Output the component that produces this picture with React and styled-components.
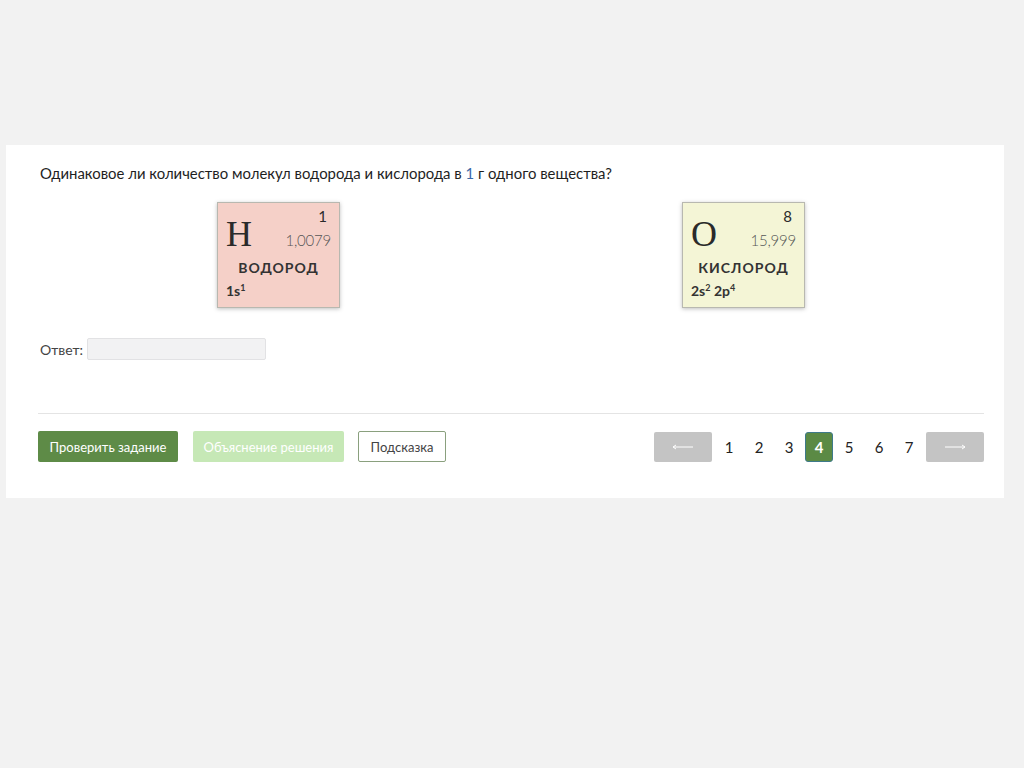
import React from "react";
import styled, { createGlobalStyle } from "styled-components";

const Global = createGlobalStyle`
  html, body { margin: 0; padding: 0; background: #f2f2f2; }
  body { font-family: "Lato", "Open Sans", sans-serif; color: #222; }
`;

const Page = styled.div`
  padding: 145px 20px 0 6px;
`;

const Panel = styled.div`
  width: 998px;
  height: 353px;
  box-sizing: border-box;
  background: #fff;
  padding: 18px 20px 0 32px;
`;

const Question = styled.div`
  font-size: 14.9px;
  line-height: 20px;
  color: #1e1e1e;
  margin-left: 2px;
`;

const Num = styled.span`
  color: #3d6aa8;
`;

const CardsRow = styled.div`
  display: flex;
  margin-top: 19px;
  padding-left: 179px;
  gap: 342px;
`;

const Card = styled.div`
  width: 123px;
  height: 106px;
  box-sizing: border-box;
  background: ${p => p.$bg};
  border: 1px solid #b8b8b0;
  box-shadow: 0 1px 4px rgba(0,0,0,0.25);
  display: grid;
  grid-template-columns: auto 1fr;
  grid-template-rows: 12px 30px 26px auto;
  padding: 5px 8px 0 8px;
  color: #2a2a2a;
`;

const Number = styled.div`
  grid-column: 2;
  grid-row: 1;
  justify-self: end;
  font-size: 15px;
  line-height: 16px;
  margin-right: 4px;
`;

const Symbol = styled.div`
  grid-column: 1;
  grid-row: 1 / span 2;
  align-self: end;
  font-family: "Liberation Serif", serif;
  font-size: 36px;
  line-height: 36px;
  margin-bottom: -2px;
  color: #2a2a2a;
`;

const Mass = styled.div`
  grid-column: 2;
  grid-row: 2;
  justify-self: end;
  align-self: end;
  font-size: 15px;
  font-weight: 300;
  color: #555;
  margin-bottom: 1px;
  letter-spacing: -0.2px;
`;

const Name = styled.div`
  grid-column: 1 / span 2;
  grid-row: 3;
  justify-self: center;
  align-self: end;
  font-size: 14px;
  font-weight: 700;
  letter-spacing: 1px;
  color: #333;
`;

const Config = styled.div`
  grid-column: 1 / span 2;
  grid-row: 4;
  font-size: 14px;
  font-weight: 700;
  margin-top: 6px;
  color: #333;
  sup { font-size: 9px; vertical-align: 5px; line-height: 0; }
`;

const AnswerRow = styled.div`
  display: flex;
  align-items: center;
  margin-top: 30px;
  margin-left: 2px;
  gap: 4px;
`;

const AnswerLabel = styled.span`
  font-size: 14px;
  color: #444;
`;

const AnswerInput = styled.div`
  width: 177px;
  height: 20px;
  background: #f2f2f3;
  border: 1px solid #e2e2e4;
  border-radius: 2px;
`;

const Divider = styled.div`
  height: 1px;
  background: #e4e4e4;
  margin-top: 53px;
`;

const Footer = styled.div`
  display: flex;
  align-items: center;
  margin-top: 17px;
`;

const Btn = styled.div`
  height: 31px;
  box-sizing: border-box;
  padding: 0;
  display: flex;
  align-items: center;
  justify-content: center;
  white-space: nowrap;
  border-radius: 2px;
  font-size: 13px;
  width: ${p => p.$w}px;
  margin-right: ${p => p.$mr || 0}px;
  background: ${p => p.$bg};
  color: ${p => p.$color};
  border: ${p => p.$border || "none"};
`;

const Spacer = styled.div`
  flex: 1;
`;

const Pager = styled.div`
  display: flex;
  align-items: center;
`;

const Arrow = styled.div`
  width: 58px;
  height: 30px;
  background: #c4c4c4;
  border-radius: 2px;
  display: flex;
  align-items: center;
  justify-content: center;
  margin: ${p => p.$m};
`;

const PageNum = styled.div`
  width: 28px;
  height: 30px;
  margin: 0 1px;
  display: flex;
  align-items: center;
  justify-content: center;
  font-size: 15px;
  font-weight: ${p => (p.$active ? 700 : 400)};
  color: ${p => (p.$active ? "#fff" : "#222")};
  background: ${p => (p.$active ? "#5b8a45" : "transparent")};
  border: ${p => (p.$active ? "1px solid #3e7a8a" : "none")};
  box-sizing: border-box;
  border-radius: 3px;
`;

const ArrowIcon = ({ dir }) => (
  <svg width="22" height="6" viewBox="0 0 22 6">
    {dir === "left" ? (
      <path d="M1 3 H21 M1 3 L4 1 M1 3 L4 5" stroke="#fff" strokeWidth="1" fill="none" />
    ) : (
      <path d="M1 3 H21 M21 3 L18 1 M21 3 L18 5" stroke="#fff" strokeWidth="1" fill="none" />
    )}
  </svg>
);

const Element = ({ bg, num, sym, mass, name, children }) => (
  <Card $bg={bg}>
    <Number>{num}</Number>
    <Symbol>{sym}</Symbol>
    <Mass>{mass}</Mass>
    <Name>{name}</Name>
    <Config>{children}</Config>
  </Card>
);

export default function App() {
  return (
    <>
      <Global />
      <Page>
        <Panel>
          <Question>
            Одинаковое ли количество молекул водорода и кислорода в <Num>1</Num> г одного вещества?
          </Question>
          <CardsRow>
            <Element bg="#f5d0c8" num="1" sym="H" mass="1,0079" name="ВОДОРОД">
              1s<sup>1</sup>
            </Element>
            <Element bg="#f4f5d6" num="8" sym="O" mass="15,999" name="КИСЛОРОД">
              2s<sup>2</sup> 2p<sup>4</sup>
            </Element>
          </CardsRow>
          <AnswerRow>
            <AnswerLabel>Ответ:</AnswerLabel>
            <AnswerInput />
          </AnswerRow>
          <Divider />
          <Footer>
            <Btn $w={140} $mr={15} $bg="#5e8b47" $color="#fff">Проверить задание</Btn>
            <Btn $w={151} $mr={14} $bg="#c6e8b6" $color="#fff">Объяснение решения</Btn>
            <Btn $w={88} $bg="#fff" $color="#444" $border="1px solid #8aa07e">Подсказка</Btn>
            <Spacer />
            <Pager>
              <Arrow $m="0 2px 0 0"><ArrowIcon dir="left" /></Arrow>
              {[1, 2, 3, 4, 5, 6, 7].map(n => (
                <PageNum key={n} $active={n === 4}>{n}</PageNum>
              ))}
              <Arrow $m="0 0 0 2px"><ArrowIcon dir="right" /></Arrow>
            </Pager>
          </Footer>
        </Panel>
      </Page>
    </>
  );
}
